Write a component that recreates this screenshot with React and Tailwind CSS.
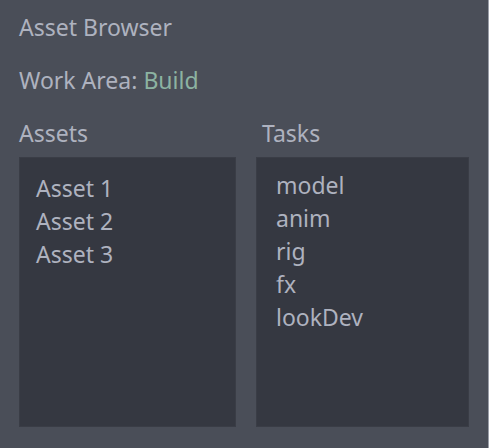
import React from 'react';

const assets = ['Asset 1', 'Asset 2', 'Asset 3'];
const tasks = ['model', 'anim', 'rig', 'fx', 'lookDev'];

export default function App() {
    return (
        <div
            className="w-[489px] h-[448px] bg-[#4a4e58] border-r border-[#9a9ea8] flex flex-col pl-[19px] pr-[19px] pt-[11px] pb-[21px] text-[#aeb2bf] text-[23px] leading-[33px]"
            style={{ fontFamily: '"Noto Sans", "Open Sans", sans-serif' }}
        >
            <div className="h-[33px]">Asset Browser</div>
            <div className="h-[33px] mt-[20px]">
                Work Area: <span className="text-[#8cb3a2]">Build</span>
            </div>
            <div className="flex-1 flex gap-[20px] mt-[20px]">
                <div className="w-[217px] flex flex-col">
                    <div className="h-[33px] mb-[7px]">Assets</div>
                    <div className="flex-1 bg-[#353841] border border-[#3a3d46] pl-[16px] pt-[14px]">
                        {assets.map((a) => (
                            <div key={a}>{a}</div>
                        ))}
                    </div>
                </div>
                <div className="flex-1 flex flex-col">
                    <div className="h-[33px] mb-[7px] pl-[6px]">Tasks</div>
                    <div className="flex-1 bg-[#353841] border border-[#3a3d46] pl-[19px] pt-[11px]">
                        {tasks.map((t) => (
                            <div key={t}>{t}</div>
                        ))}
                    </div>
                </div>
            </div>
        </div>
    );
}
